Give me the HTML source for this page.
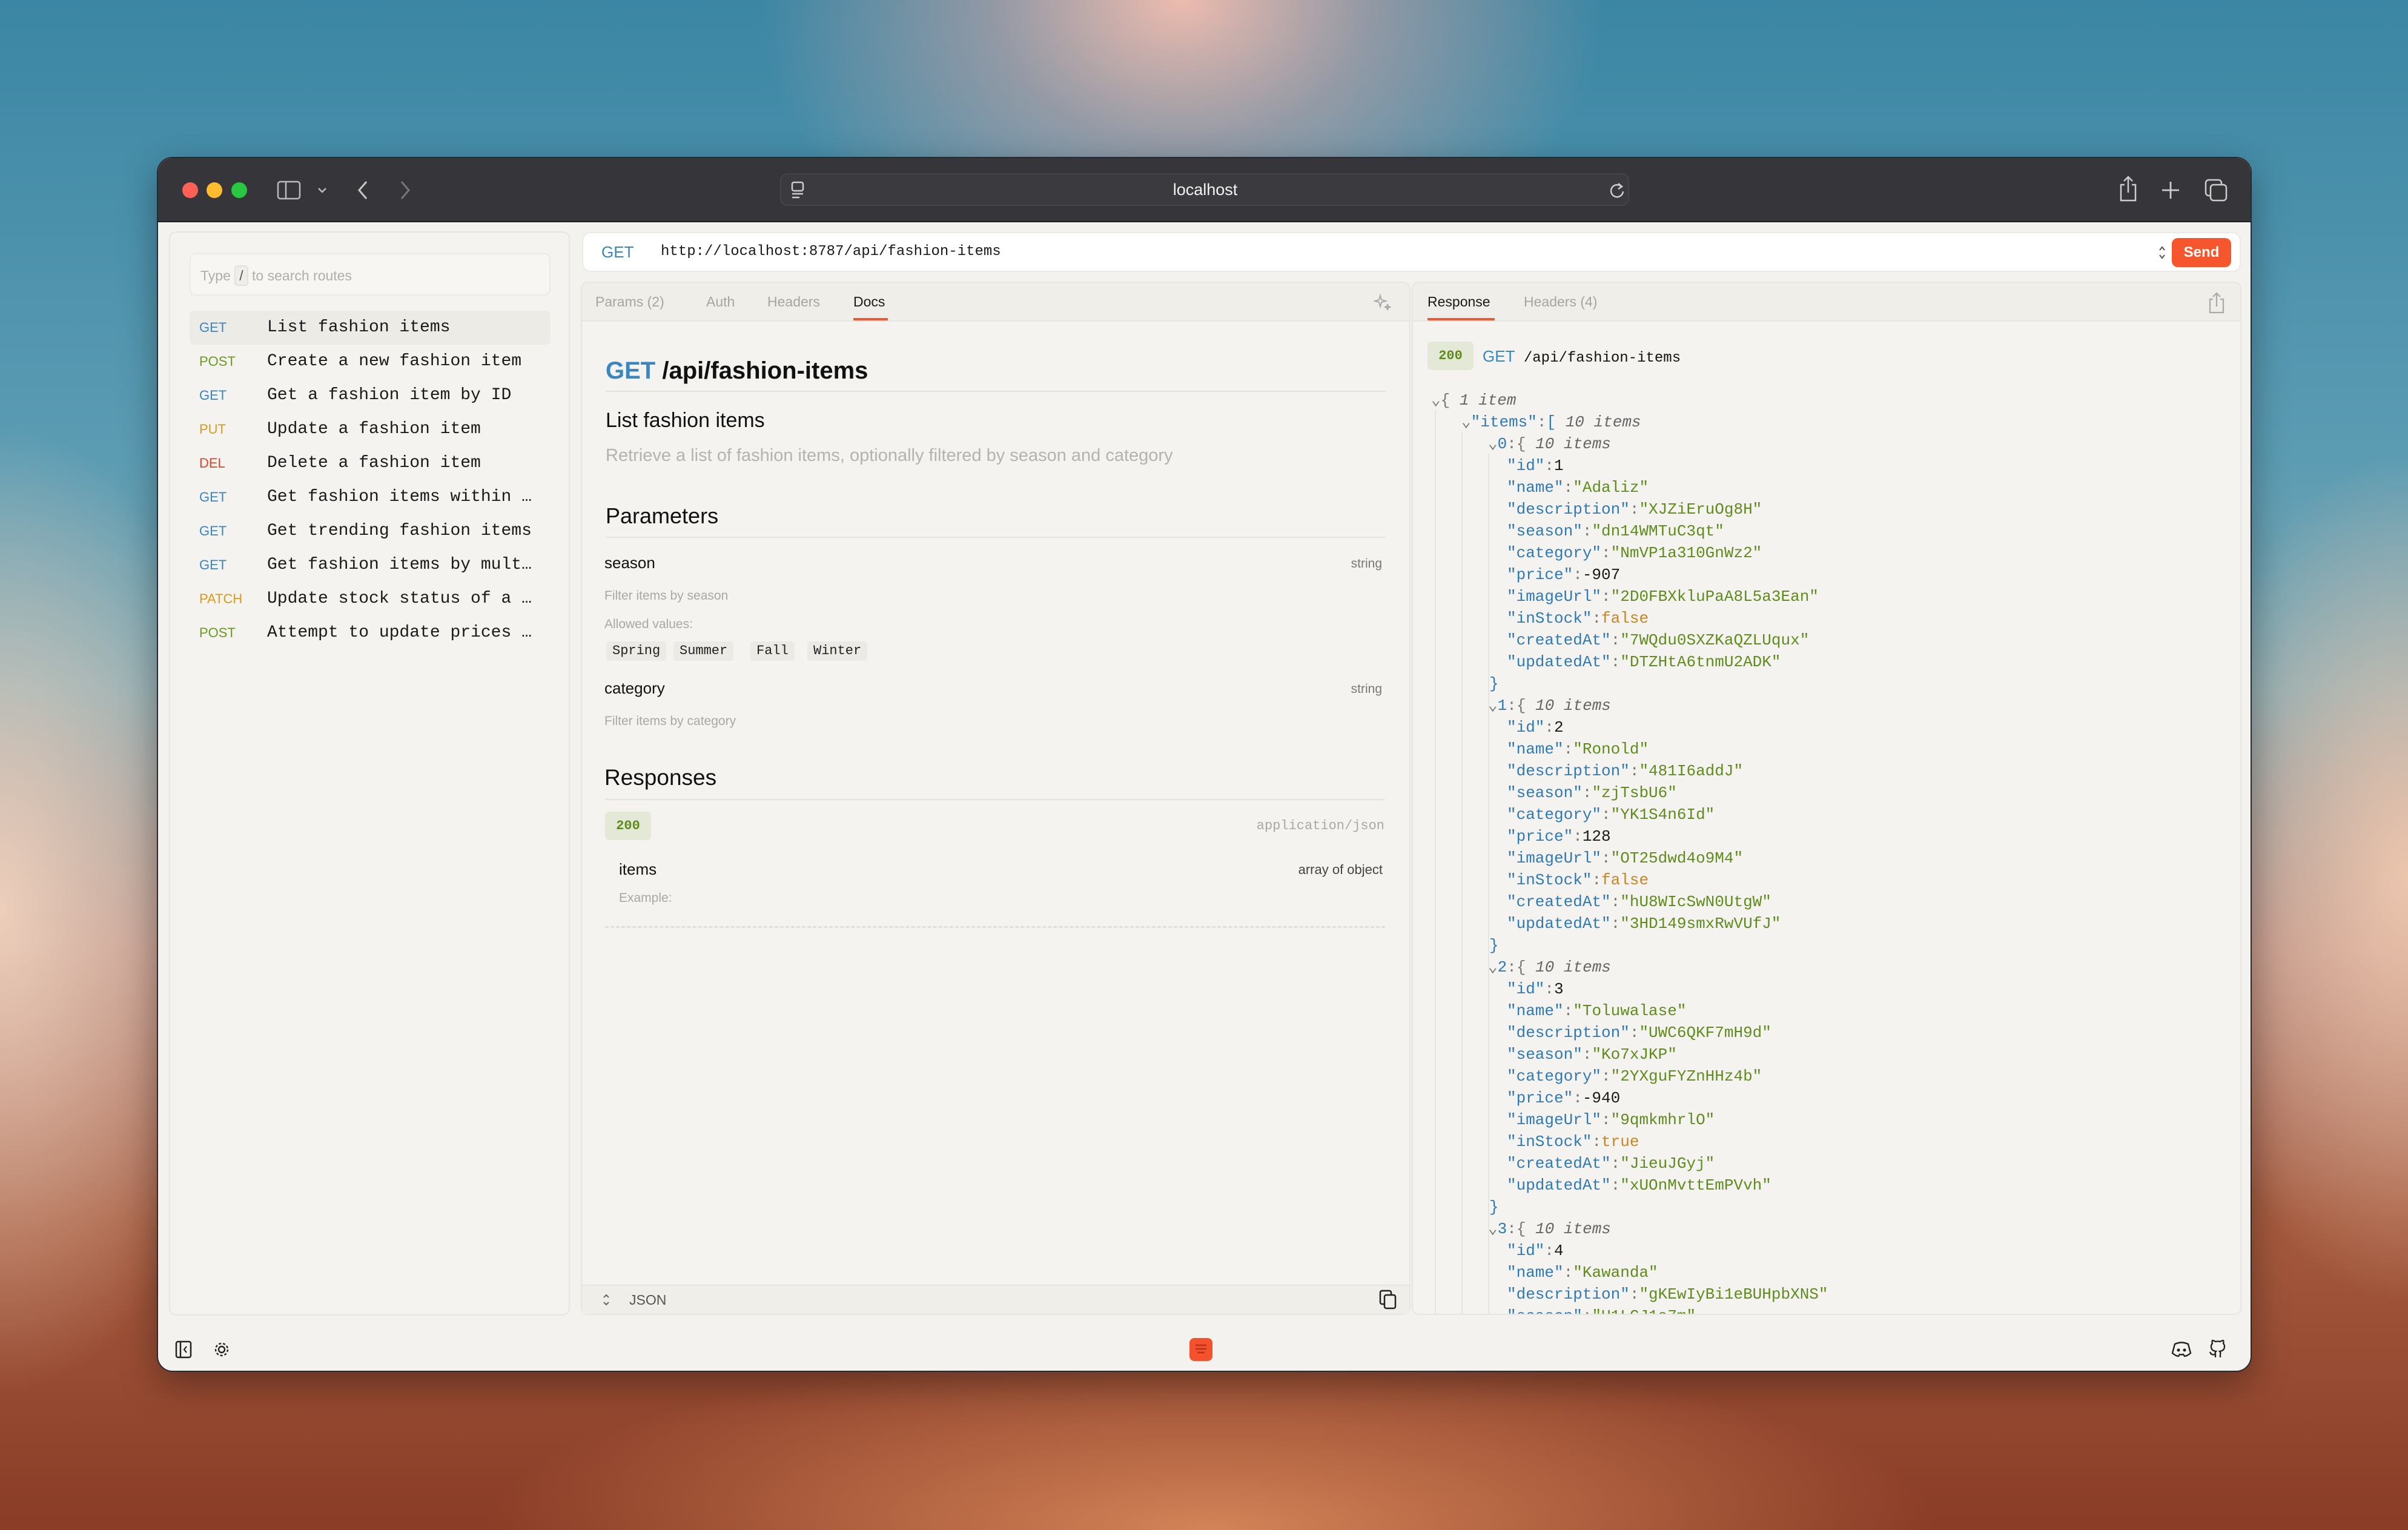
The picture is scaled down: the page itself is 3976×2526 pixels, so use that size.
<!DOCTYPE html>
<html><head><meta charset="utf-8">
<style>
*{margin:0;padding:0;box-sizing:border-box}
html,body{width:3976px;height:2526px;overflow:hidden}
body{position:relative;font-family:"Liberation Sans",sans-serif;
background:
radial-gradient(ellipse 700px 520px at 1950px 0px,rgba(246,190,175,.95),rgba(230,170,165,.5) 45%,rgba(0,0,0,0) 100%),
radial-gradient(ellipse 420px 800px at 0px 1500px,rgba(240,210,190,.95),rgba(0,0,0,0) 100%),
radial-gradient(ellipse 380px 700px at 3976px 1450px,rgba(240,200,175,.95),rgba(0,0,0,0) 100%),
radial-gradient(ellipse 1200px 300px at 2000px 2526px,rgba(230,150,100,.8),rgba(0,0,0,0) 100%),
linear-gradient(180deg,#3b86a4 0%,#5c9cb3 30%,#80a8b2 45%,#b48a80 62%,#a45a3e 80%,#8a3c26 100%);}
.a{position:absolute}
.mono{font-family:"Liberation Mono",monospace}
.win{left:259px;top:259px;width:3459px;height:2006px;border-radius:26px;background:#f3f2ee;overflow:hidden;box-shadow:0 20px 60px rgba(0,0,0,.35);border:2px solid #2a2a2c}
.title{left:0;top:0;width:100%;height:106px;background:#36363a;border-bottom:2px solid #1f1f21}
.dot{width:26px;height:26px;border-radius:50%;top:40px}
.panel{background:#f4f3ef;border:2px solid #e6e5e0;border-radius:12px}
.row{position:absolute;left:32px;width:596px;height:56px;font-size:28px;line-height:56px;border-radius:8px}
.row .m{position:absolute;left:16px;font-family:"Liberation Sans",sans-serif;font-size:22px}
.row .t{position:absolute;left:128px;font-family:"Liberation Mono",monospace;color:#1a1a1a;white-space:nowrap}
.get{color:#3b85c0}.post{color:#6b9a1f}.put{color:#d99a1d}.del{color:#d8452b}.patch{color:#d99a1d}
.tab{position:absolute;top:0;line-height:62px;font-size:23px;color:#a7a59f}
.json{font-family:"Liberation Mono",monospace;font-size:26px;line-height:36px}
.json div{position:relative;height:36px;white-space:pre}
.k{color:#2f7ab5}.s{color:#5f8c1c}.b{color:#c98522}.n{color:#1a1a1a}.c{color:#666;font-style:italic}.p{color:#777}
.chip{position:absolute;height:32px;line-height:32px;padding:0 10px;background:#ebeae5;border-radius:5px;font-family:"Liberation Mono",monospace;font-size:22px;color:#222}
</style></head><body>
<div class="a win">
 <div class="a title">
  <div class="a dot" style="left:40px;background:#fe5f57"></div>
  <div class="a dot" style="left:80px;background:#febc2e"></div>
  <div class="a dot" style="left:121px;background:#28c840"></div>
  <svg class="a" style="left:196px;top:37px" width="40" height="32" viewBox="0 0 40 32"><rect x="2" y="2" width="36" height="28" rx="4" fill="none" stroke="#bbb" stroke-width="2.5"/><line x1="15" y1="2" x2="15" y2="30" stroke="#bbb" stroke-width="2.5"/></svg>
  <svg class="a" style="left:262px;top:46px" width="18" height="14" viewBox="0 0 18 14"><path d="M3 4l6 6 6-6" fill="none" stroke="#bbb" stroke-width="2.5"/></svg>
  <svg class="a" style="left:328px;top:36px" width="20" height="34" viewBox="0 0 20 34"><path d="M16 3L4 17l12 14" fill="none" stroke="#c8c8c8" stroke-width="3"/></svg>
  <svg class="a" style="left:398px;top:36px" width="20" height="34" viewBox="0 0 20 34"><path d="M4 3l12 14L4 31" fill="none" stroke="#777" stroke-width="3"/></svg>
  <div class="a" style="left:1027px;top:25px;width:1402px;height:54px;border-radius:12px;background:#3b3b3f;border:2px solid #454549"></div>
  <svg class="a" style="left:1043px;top:38px" width="26" height="30" viewBox="0 0 26 30"><rect x="4" y="2" width="18" height="14" rx="3" fill="none" stroke="#ccc" stroke-width="2.5"/><line x1="4" y1="21" x2="22" y2="21" stroke="#ccc" stroke-width="2.5"/><line x1="4" y1="27" x2="16" y2="27" stroke="#ccc" stroke-width="2.5"/></svg>
  <div class="a" style="left:1629px;top:35px;width:200px;font-size:27px;line-height:34px;color:#f2f2f2;text-align:center">localhost</div>
  <svg class="a" style="left:2394px;top:38px" width="30" height="30" viewBox="0 0 30 30"><path d="M22 9A10 10 0 1 0 25 17" fill="none" stroke="#ccc" stroke-width="2.5"/><path d="M17 4l6 5-6 4" fill="none" stroke="#ccc" stroke-width="2.5"/></svg>
  <svg class="a" style="left:3236px;top:28px" width="34" height="46" viewBox="0 0 34 46"><path d="M11 16H5v26h24V16h-6M17 3v26M10 10l7-7 7 7" fill="none" stroke="#ccc" stroke-width="2.5"/></svg>
  <svg class="a" style="left:3306px;top:36px" width="34" height="34" viewBox="0 0 34 34"><path d="M17 3v28M3 17h28" stroke="#ccc" stroke-width="2.8"/></svg>
  <svg class="a" style="left:3378px;top:33px" width="40" height="40" viewBox="0 0 40 40"><rect x="3" y="3" width="26" height="26" rx="5" fill="none" stroke="#ccc" stroke-width="2.5"/><rect x="11" y="11" width="26" height="26" rx="5" fill="#36363a" stroke="#ccc" stroke-width="2.5"/></svg>
 </div>

 <div class="a panel" style="left:18px;top:121px;width:662px;height:1790px">
  <div class="a" style="left:32px;top:34px;width:596px;height:70px;border:2px solid #ebeae6;border-radius:10px;background:#f7f6f3"></div>
  <div class="a" style="left:50px;top:54px;font-size:23px;line-height:30px;color:#b0aea8">Type <span style="display:inline-block;border:2px solid #e2e1dc;border-radius:5px;padding:0 6px;color:#555;background:#efeee9">/</span> to search routes</div>
  <div class="row" style="top:129px;background:#ecebe6"><span class="m get">GET</span><span class="t">List fashion items</span></div>
  <div class="row" style="top:185px"><span class="m post">POST</span><span class="t">Create a new fashion item</span></div>
  <div class="row" style="top:241px"><span class="m get">GET</span><span class="t">Get a fashion item by ID</span></div>
  <div class="row" style="top:297px"><span class="m put">PUT</span><span class="t">Update a fashion item</span></div>
  <div class="row" style="top:353px"><span class="m del">DEL</span><span class="t">Delete a fashion item</span></div>
  <div class="row" style="top:409px"><span class="m get">GET</span><span class="t">Get fashion items within …</span></div>
  <div class="row" style="top:465px"><span class="m get">GET</span><span class="t">Get trending fashion items</span></div>
  <div class="row" style="top:521px"><span class="m get">GET</span><span class="t">Get fashion items by mult…</span></div>
  <div class="row" style="top:577px"><span class="m patch">PATCH</span><span class="t">Update stock status of a …</span></div>
  <div class="row" style="top:633px"><span class="m post">POST</span><span class="t">Attempt to update prices …</span></div>
 </div>

 <div class="a" style="left:700px;top:122px;width:2739px;height:66px;background:#fff;border:2px solid #ebeae5;border-radius:14px">
  <div class="a" style="left:30px;top:0;line-height:62px;font-size:26px;color:#3b85c0">GET</div>
  <div class="a mono" style="left:128px;top:0;line-height:62px;font-size:24px;color:#1a1a1a">http://localhost:8787/api/fashion-items</div>
  <svg class="a" style="left:2600px;top:19px" width="14" height="26" viewBox="0 0 14 26"><path d="M3 9l4-5 4 5M3 17l4 5 4-5" fill="none" stroke="#555" stroke-width="2"/></svg>
  <div class="a" style="left:2623px;top:8px;width:98px;height:48px;background:#f5562e;border-radius:10px;color:#fff;font-weight:bold;font-size:24px;line-height:48px;text-align:center">Send</div>
 </div>

 <div class="a panel" style="left:698px;top:204px;width:1370px;height:1706px;overflow:hidden">
  <div class="a" style="left:0;top:0;width:100%;height:64px;background:#efeee9;border-bottom:2px solid #e6e5e0">
   <span class="tab" style="left:22px">Params (2)</span>
   <span class="tab" style="left:205px">Auth</span>
   <span class="tab" style="left:306px">Headers</span>
   <span class="tab" style="left:448px;color:#1a1a1a">Docs</span>
   <div class="a" style="left:448px;top:58px;width:57px;height:4px;background:#ef5a35"></div>
   <svg class="a" style="left:1306px;top:17px" width="32" height="32" viewBox="0 0 32 32"><path d="M12 4l2 7 7 2-7 2-2 7-2-7-7-2 7-2zM24 18l1 4 4 1-4 1-1 4-1-4-4-1 4-1z" fill="none" stroke="#aaa" stroke-width="2"/></svg>
  </div>
  <div class="a" style="left:39px;top:120px;font-size:40px;font-weight:bold;color:#111;line-height:50px"><span style="color:#3b85c0">GET</span> /api/fashion-items</div>
  <div class="a" style="left:39px;top:178px;width:1288px;height:2px;background:#e3e2dd"></div>
  <div class="a" style="left:39px;top:205px;font-size:34px;color:#111;line-height:44px">List fashion items</div>
  <div class="a" style="left:39px;top:265px;font-size:29px;color:#b5b3ad;line-height:40px">Retrieve a list of fashion items, optionally filtered by season and category</div>
  <div class="a" style="left:39px;top:362px;font-size:36px;color:#111;line-height:46px">Parameters</div>
  <div class="a" style="left:39px;top:419px;width:1288px;height:2px;background:#e3e2dd"></div>
 </div>
 <div class="a" style="left:737px;top:651px;font-size:26px;color:#111;line-height:34px">season</div>
 <div class="a" style="left:1940px;top:655px;width:81px;text-align:right;font-size:21px;color:#777;line-height:30px">string</div>
 <div class="a" style="left:737px;top:709px;font-size:21px;color:#aaa8a2;line-height:28px">Filter items by season</div>
 <div class="a" style="left:737px;top:756px;font-size:21px;color:#aaa8a2;line-height:28px">Allowed values:</div>
 <div class="chip" style="left:740px;top:798px">Spring</div>
 <div class="chip" style="left:851px;top:798px">Summer</div>
 <div class="chip" style="left:978px;top:798px">Fall</div>
 <div class="chip" style="left:1072px;top:798px">Winter</div>
 <div class="a" style="left:737px;top:858px;font-size:26px;color:#111;line-height:34px">category</div>
 <div class="a" style="left:1940px;top:862px;width:81px;text-align:right;font-size:21px;color:#777;line-height:30px">string</div>
 <div class="a" style="left:737px;top:916px;font-size:21px;color:#aaa8a2;line-height:28px">Filter items by category</div>
 <div class="a" style="left:737px;top:999px;font-size:37px;color:#111;line-height:48px">Responses</div>
 <div class="a" style="left:738px;top:1058px;width:1288px;height:2px;background:#e3e2dd"></div>
 <div class="a mono" style="left:738px;top:1079px;width:76px;height:47px;background:#e4e8d6;border-radius:7px;color:#5f8c1c;font-weight:bold;font-size:22px;line-height:47px;text-align:center">200</div>
 <div class="a mono" style="left:1700px;top:1089px;width:325px;text-align:right;font-size:22px;color:#aaa8a2;line-height:28px">application/json</div>
 <div class="a" style="left:761px;top:1157px;font-size:26px;color:#111;line-height:34px">items</div>
 <div class="a" style="left:1800px;top:1160px;width:222px;text-align:right;font-size:22px;color:#444;line-height:30px">array of object</div>
 <div class="a" style="left:761px;top:1208px;font-size:21px;color:#aaa8a2;line-height:28px">Example:</div>
 <div class="a" style="left:738px;top:1268px;width:1288px;height:0;border-top:3px dashed #e0dfda"></div>
 <div class="a" style="left:700px;top:1860px;width:1366px;height:48px;background:#efeee9;border-top:2px solid #e6e5e0"></div>
 <svg class="a" style="left:733px;top:1873px" width="14" height="24" viewBox="0 0 14 24"><path d="M3 8l4-4 4 4M3 16l4 4 4-4" fill="none" stroke="#666" stroke-width="2"/></svg>
 <div class="a" style="left:778px;top:1870px;font-size:23px;color:#555;line-height:30px">JSON</div>
 <svg class="a" style="left:2016px;top:1868px" width="30" height="34" viewBox="0 0 30 34"><rect x="2" y="2" width="18" height="22" rx="3" fill="none" stroke="#222" stroke-width="2.5"/><rect x="9" y="9" width="18" height="22" rx="3" fill="#efeee9" stroke="#222" stroke-width="2.5"/></svg>

 <div class="a panel" style="left:2070px;top:204px;width:1370px;height:1706px;overflow:hidden">
  <div class="a" style="left:0;top:0;width:100%;height:64px;background:#efeee9;border-bottom:2px solid #e6e5e0">
   <span class="tab" style="left:24px;color:#1a1a1a">Response</span>
   <span class="tab" style="left:183px">Headers (4)</span>
   <div class="a" style="left:24px;top:58px;width:111px;height:4px;background:#ef5a35"></div>
   <svg class="a" style="left:1312px;top:14px" width="30" height="38" viewBox="0 0 30 38"><path d="M9 13H4v22h22V13h-5M15 3v22M9 9l6-6 6 6" fill="none" stroke="#aaa" stroke-width="2.2"/></svg>
  </div>
  <div class="a mono" style="left:24px;top:97px;width:76px;height:47px;background:#e4e8d6;border-radius:7px;color:#5f8c1c;font-weight:bold;font-size:22px;line-height:47px;text-align:center">200</div>
  <div class="a mono" style="left:115px;top:103px;font-size:24px;line-height:36px;color:#111"><span style="color:#3b85c0;font-family:'Liberation Sans',sans-serif;font-size:26px">GET</span>&nbsp;/api/fashion-items</div>
  <div class="a" style="left:36px;top:210px;width:2px;height:1500px;background:#e6e5e0"></div>
  <div class="a" style="left:80px;top:246px;width:2px;height:1500px;background:#e6e5e0"></div>
  <div class="a" style="left:124px;top:282px;width:2px;height:1500px;background:#e6e5e0"></div>
  <div class="a json" style="left:30px;top:176px">
<div><span class="p">⌄</span><span class="p">{</span> <span class="c">1 item</span></div>
<div style="left:50px"><span class="p">⌄</span><span class="k">"items"</span><span class="p">:</span><span class="k">[</span> <span class="c">10 items</span></div>
<div style="left:94px"><span class="p">⌄</span><span class="k">0</span><span class="p">:</span><span class="p">{</span> <span class="c">10 items</span></div>
<div style="left:125px"><span class="k">"id"</span><span class="p">:</span><span class="n">1</span></div>
<div style="left:125px"><span class="k">"name"</span><span class="p">:</span><span class="s">"Adaliz"</span></div>
<div style="left:125px"><span class="k">"description"</span><span class="p">:</span><span class="s">"XJZiEruOg8H"</span></div>
<div style="left:125px"><span class="k">"season"</span><span class="p">:</span><span class="s">"dn14WMTuC3qt"</span></div>
<div style="left:125px"><span class="k">"category"</span><span class="p">:</span><span class="s">"NmVP1a310GnWz2"</span></div>
<div style="left:125px"><span class="k">"price"</span><span class="p">:</span><span class="n">-907</span></div>
<div style="left:125px"><span class="k">"imageUrl"</span><span class="p">:</span><span class="s">"2D0FBXkluPaA8L5a3Ean"</span></div>
<div style="left:125px"><span class="k">"inStock"</span><span class="p">:</span><span class="b">false</span></div>
<div style="left:125px"><span class="k">"createdAt"</span><span class="p">:</span><span class="s">"7WQdu0SXZKaQZLUqux"</span></div>
<div style="left:125px"><span class="k">"updatedAt"</span><span class="p">:</span><span class="s">"DTZHtA6tnmU2ADK"</span></div>
<div style="left:96px"><span class="k">}</span></div>
<div style="left:94px"><span class="p">⌄</span><span class="k">1</span><span class="p">:</span><span class="p">{</span> <span class="c">10 items</span></div>
<div style="left:125px"><span class="k">"id"</span><span class="p">:</span><span class="n">2</span></div>
<div style="left:125px"><span class="k">"name"</span><span class="p">:</span><span class="s">"Ronold"</span></div>
<div style="left:125px"><span class="k">"description"</span><span class="p">:</span><span class="s">"481I6addJ"</span></div>
<div style="left:125px"><span class="k">"season"</span><span class="p">:</span><span class="s">"zjTsbU6"</span></div>
<div style="left:125px"><span class="k">"category"</span><span class="p">:</span><span class="s">"YK1S4n6Id"</span></div>
<div style="left:125px"><span class="k">"price"</span><span class="p">:</span><span class="n">128</span></div>
<div style="left:125px"><span class="k">"imageUrl"</span><span class="p">:</span><span class="s">"OT25dwd4o9M4"</span></div>
<div style="left:125px"><span class="k">"inStock"</span><span class="p">:</span><span class="b">false</span></div>
<div style="left:125px"><span class="k">"createdAt"</span><span class="p">:</span><span class="s">"hU8WIcSwN0UtgW"</span></div>
<div style="left:125px"><span class="k">"updatedAt"</span><span class="p">:</span><span class="s">"3HD149smxRwVUfJ"</span></div>
<div style="left:96px"><span class="k">}</span></div>
<div style="left:94px"><span class="p">⌄</span><span class="k">2</span><span class="p">:</span><span class="p">{</span> <span class="c">10 items</span></div>
<div style="left:125px"><span class="k">"id"</span><span class="p">:</span><span class="n">3</span></div>
<div style="left:125px"><span class="k">"name"</span><span class="p">:</span><span class="s">"Toluwalase"</span></div>
<div style="left:125px"><span class="k">"description"</span><span class="p">:</span><span class="s">"UWC6QKF7mH9d"</span></div>
<div style="left:125px"><span class="k">"season"</span><span class="p">:</span><span class="s">"Ko7xJKP"</span></div>
<div style="left:125px"><span class="k">"category"</span><span class="p">:</span><span class="s">"2YXguFYZnHHz4b"</span></div>
<div style="left:125px"><span class="k">"price"</span><span class="p">:</span><span class="n">-940</span></div>
<div style="left:125px"><span class="k">"imageUrl"</span><span class="p">:</span><span class="s">"9qmkmhrlO"</span></div>
<div style="left:125px"><span class="k">"inStock"</span><span class="p">:</span><span class="b">true</span></div>
<div style="left:125px"><span class="k">"createdAt"</span><span class="p">:</span><span class="s">"JieuJGyj"</span></div>
<div style="left:125px"><span class="k">"updatedAt"</span><span class="p">:</span><span class="s">"xUOnMvttEmPVvh"</span></div>
<div style="left:96px"><span class="k">}</span></div>
<div style="left:94px"><span class="p">⌄</span><span class="k">3</span><span class="p">:</span><span class="p">{</span> <span class="c">10 items</span></div>
<div style="left:125px"><span class="k">"id"</span><span class="p">:</span><span class="n">4</span></div>
<div style="left:125px"><span class="k">"name"</span><span class="p">:</span><span class="s">"Kawanda"</span></div>
<div style="left:125px"><span class="k">"description"</span><span class="p">:</span><span class="s">"gKEwIyBi1eBUHpbXNS"</span></div>
<div style="left:125px"><span class="k">"season"</span><span class="p">:</span><span class="s">"U1LCJ1a7m"</span></div>
  </div>
 </div>

 <svg class="a" style="left:28px;top:1952px" width="28" height="30" viewBox="0 0 28 30"><rect x="2" y="2" width="24" height="26" rx="3" fill="none" stroke="#222" stroke-width="2.5"/><line x1="9" y1="2" x2="9" y2="28" stroke="#222" stroke-width="2.5"/><path d="M19 10l-4 5 4 5" fill="none" stroke="#222" stroke-width="2.2"/></svg>
 <svg class="a" style="left:90px;top:1952px" width="30" height="30" viewBox="0 0 30 30"><circle cx="15" cy="15" r="5" fill="none" stroke="#222" stroke-width="2.4"/><circle cx="15" cy="15" r="10" fill="none" stroke="#222" stroke-width="2.4" stroke-dasharray="4 3"/></svg>
 <div class="a" style="left:1703px;top:1948px;width:38px;height:38px;background:#f4522c;border-radius:8px"></div>
 <svg class="a" style="left:1710px;top:1956px" width="24" height="22" viewBox="0 0 24 22"><path d="M3 4h18M3 10h18M6 16h12" stroke="#b8321a" stroke-width="2.4"/></svg>
 <svg class="a" style="left:3324px;top:1953px" width="34" height="28" viewBox="0 0 34 28"><path d="M6 5q11-5 22 0l4 15q-6 5-10 5l-2-3q-3 1-6 0l-2 3q-4 0-10-5z" fill="none" stroke="#222" stroke-width="2.4"/><circle cx="12" cy="15" r="2.5" fill="#222"/><circle cx="22" cy="15" r="2.5" fill="#222"/></svg>
 <svg class="a" style="left:3386px;top:1951px" width="30" height="32" viewBox="0 0 30 32"><path d="M11 29v-5q-7 2-9-4M19 29v-5q1-3-1-5 8-1 8-8 0-3-2-5 1-3 0-5-2 0-5 2-4-1-8 0-3-2-5-2-1 2 0 5-2 2-2 5 0 7 8 8-2 2-1 5" fill="none" stroke="#222" stroke-width="2.3"/></svg>
</div>
</body></html>
